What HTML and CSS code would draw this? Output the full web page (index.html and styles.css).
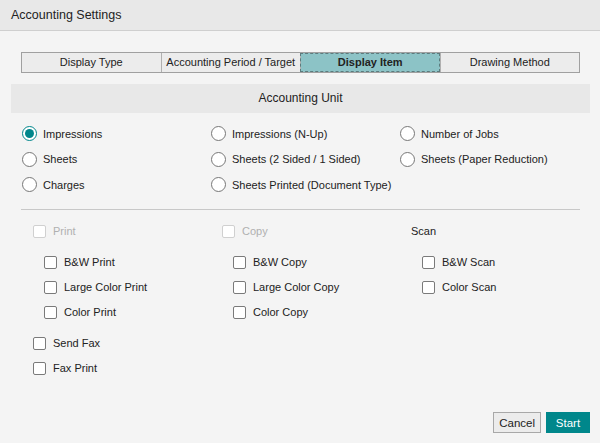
FILE: index.html
```html
<!DOCTYPE html>
<html lang="en">
<head>
    <meta charset="UTF-8">
    <title>Accounting Settings</title>
    <link rel="stylesheet" href="styles.css">
</head>
<body>
    <div class="titlebar">Accounting Settings</div>

    <div class="content">
        <!-- tabs -->
        <div class="tabs">
            <div class="tab">Display Type</div>
            <div class="tab">Accounting Period / Target</div>
            <div class="tab active">Display Item</div>
            <div class="tab">Drawing Method</div>
        </div>

        <div class="section-head">Accounting Unit</div>

        <div class="radios">
            <label class="radio checked"><span class="dot"></span>Impressions</label>
            <label class="radio"><span class="dot"></span>Impressions (N-Up)</label>
            <label class="radio"><span class="dot"></span>Number of Jobs</label>
            <label class="radio"><span class="dot"></span>Sheets</label>
            <label class="radio"><span class="dot"></span>Sheets (2 Sided / 1 Sided)</label>
            <label class="radio"><span class="dot"></span>Sheets (Paper Reduction)</label>
            <label class="radio"><span class="dot"></span>Charges</label>
            <label class="radio"><span class="dot"></span>Sheets Printed (Document Type)</label>
        </div>

        <div class="separator"></div>

        <div class="groups">
            <div class="group">
                <label class="check disabled"><span class="box"></span>Print</label>
                <div class="items">
                    <label class="check"><span class="box"></span>B&amp;W Print</label>
                    <label class="check"><span class="box"></span>Large Color Print</label>
                    <label class="check"><span class="box"></span>Color Print</label>
                </div>
            </div>
            <div class="group">
                <label class="check disabled"><span class="box"></span>Copy</label>
                <div class="items">
                    <label class="check"><span class="box"></span>B&amp;W Copy</label>
                    <label class="check"><span class="box"></span>Large Color Copy</label>
                    <label class="check"><span class="box"></span>Color Copy</label>
                </div>
            </div>
            <div class="group">
                <div class="check">Scan</div>
                <div class="items">
                    <label class="check"><span class="box"></span>B&amp;W Scan</label>
                    <label class="check"><span class="box"></span>Color Scan</label>
                </div>
            </div>
        </div>

        <div class="fax">
            <label class="check"><span class="box"></span>Send Fax</label>
            <label class="check"><span class="box"></span>Fax Print</label>
        </div>
    </div>

    <div class="footer">
        <button class="btn">Cancel</button>
        <button class="btn primary">Start</button>
    </div>
</body>
</html>
```

FILE: styles.css
```css
html, body {
    height: 100%;
}
body {
    margin: 0;
    background-color: #f4f4f4;
    color: #222;
    font-family: "Liberation Sans", Arial, sans-serif;
    font-size: 11px;
    display: flex;
    flex-direction: column;
}
.titlebar {
    height: 30px;
    line-height: 30px;
    padding-left: 11px;
    font-size: 12.5px;
    background-color: #e8e8e8;
    border-bottom: 1px solid #cfcfcf;
}
.content {
    padding: 0 10px 0 11px;
}

/* tabs */
.tabs {
    display: flex;
    margin: 21px 10px 0 10px;
    border: 1px solid #a0a0a0;
    height: 19px;
}
.tab {
    flex: 1;
    text-align: center;
    line-height: 19px;
    background-color: #ececec;
    border-left: 1px solid #b0b0b0;
}
.tab:first-child {
    border-left: none;
}
.tab.active {
    background-color: #8cc3c6;
    font-weight: bold;
    outline: 1px dashed #5c7b7d;
    outline-offset: -1px;
}

.section-head {
    margin-top: 11px;
    height: 29px;
    line-height: 29px;
    text-align: center;
    font-size: 12px;
    background-color: #e8e8e8;
}

/* radio buttons */
.radios {
    display: grid;
    grid-template-columns: 189px 189px 189px;
    padding: 8px 0 0 11px;
}
.radio {
    display: flex;
    align-items: center;
    height: 25.5px;
}
.dot {
    width: 13px;
    height: 13px;
    border: 1.5px solid #777;
    border-radius: 50%;
    background-color: #fff;
    margin-right: 6px;
    position: relative;
}
.radio.checked .dot {
    border-color: #00868b;
}
.radio.checked .dot::after {
    content: "";
    position: absolute;
    left: 2px;
    top: 2px;
    width: 9px;
    height: 9px;
    border-radius: 50%;
    background-color: #00868b;
}

.separator {
    margin: 11px 10px 0 10px;
    border-top: 1px solid #c8c8c8;
}

/* checkboxes */
.groups {
    display: grid;
    grid-template-columns: 189px 189px 189px;
    padding: 9px 0 0 22px;
}
.check {
    display: flex;
    align-items: center;
    height: 25px;
}
.box {
    width: 11px;
    height: 11px;
    border: 1.5px solid #7a7a7a;
    border-radius: 2px;
    background-color: #fff;
    margin-right: 7px;
}
.check.disabled {
    color: #b0b0b0;
}
.check.disabled .box {
    border-color: #d0d0d0;
}
.items {
    margin-top: 6px;
    padding-left: 11px;
}
.fax {
    padding: 6px 0 0 22px;
}

.footer {
    margin-top: auto;
    display: flex;
    justify-content: flex-end;
    gap: 5px;
    padding: 0 10px 10px 0;
}
.btn {
    font-family: "Liberation Sans", Arial, sans-serif;
    font-size: 11.5px;
    height: 21px;
    padding: 0 5px;
    border: 1px solid #a8a8a8;
    background-color: #ececec;
    color: #222;
}
.btn.primary {
    width: 44px;
    background-color: #00878b;
    border-color: #00878b;
    color: #fff;
}
```
